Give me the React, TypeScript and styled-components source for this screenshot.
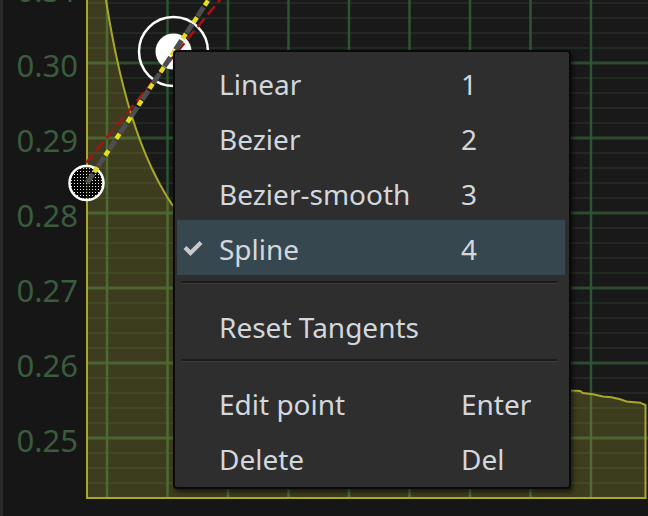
import styled, { createGlobalStyle } from 'styled-components';

type MenuItemType = {
  label: string;
  shortcut?: string;
  checked?: boolean;
};
type MenuEntryType = MenuItemType | 'separator';

const MENU_ENTRIES: MenuEntryType[] = [
  { label: 'Linear', shortcut: '1' },
  { label: 'Bezier', shortcut: '2' },
  { label: 'Bezier-smooth', shortcut: '3' },
  { label: 'Spline', shortcut: '4', checked: true },
  'separator',
  { label: 'Reset Tangents' },
  'separator',
  { label: 'Edit point', shortcut: 'Enter' },
  { label: 'Delete', shortcut: 'Del' },
];

const AXIS_LABELS = ['0.31', '0.30', '0.29', '0.28', '0.27', '0.26', '0.25'];

// the plot starts at page x = 86, everything in the svg is relative to that
const PLOT_LEFT = 86;
const px = (x: number) => x - PLOT_LEFT;

const GRID_X = Array.from({ length: 9 }, (_, i) => 21 + i * 60.5);
const GRID_Y = Array.from({ length: 34 }, (_, i) => 3 + i * 15);

const TAIL: [number, number][] = [
  [300, 300],
  [450, 370],
  [571.5, 390.5],
  [580, 391],
  [583, 393],
  [593, 394.3],
  [603, 396.5],
  [611.5, 397.3],
  [620, 399.3],
  [626.5, 401.5],
  [640, 402.7],
  [645.5, 405],
];

const buildFillPath = () => {
  const points: string[] = [];
  for (let x = 104; x <= 172; x += 2) {
    const y = 400 - 25240 / (x - 42.9);
    points.push(`${px(x)} ${y.toFixed(1)}`);
  }
  TAIL.forEach(([x, y]) => points.push(`${px(x)} ${y}`));
  return `M 1 498 L 1 -20 L ${points.join(' L ')} L ${px(645.5)} 498 Z`;
};

const CheckIcon = () => (
  <svg width="20" height="16" viewBox="0 0 20 16">
    <polyline
      points="2,7.5 7.5,13 18,2.5"
      fill="none"
      stroke="#c8cacc"
      strokeWidth="4.2"
      strokeLinejoin="miter"
    />
  </svg>
);

const CurveChart = () => (
  <ChartSvg width="562" height="499">
    <defs>
      <pattern id="halftone" width="3" height="3" patternUnits="userSpaceOnUse">
        <rect x="0" y="0" width="1" height="1" fill="#e8e8e8" />
      </pattern>
    </defs>

    {GRID_Y.map((y, i) => (
      <line
        key={`h${i}`}
        x1="0"
        x2="562"
        y1={y}
        y2={y}
        stroke={i % 5 === 4 ? '#2d4b31' : '#212922'}
        strokeWidth={i % 5 === 4 ? 3 : 2}
      />
    ))}
    {GRID_X.map((x, i) => (
      <line
        key={`v${i}`}
        x1={x}
        x2={x}
        y1="0"
        y2="499"
        stroke="#2c5532"
        strokeWidth="2.5"
      />
    ))}

    <path
      d={buildFillPath()}
      fill="rgba(200, 195, 50, 0.21)"
      stroke="#a9a82a"
      strokeWidth="2"
    />

    <circle cx="0.5" cy="183" r="17" fill="rgba(0, 0, 0, 0.85)" />
    <circle cx="0.5" cy="183" r="17" fill="url(#halftone)" stroke="#ffffff" strokeWidth="2.5" />

    <circle cx={px(173.5)} cy="51.5" r="34.5" fill="none" stroke="#ffffff" strokeWidth="2.5" />
    <circle cx={px(173.5)} cy="51.5" r="18" fill="#ffffff" />

    <line
      x1="0"
      y1="163"
      x2={px(228)}
      y2="-10"
      stroke="#a01515"
      strokeWidth="2.5"
      strokeDasharray="11 5"
    />
    <line
      x1="1"
      y1="183"
      x2={px(215)}
      y2="-10"
      stroke="#4e4e4e"
      strokeWidth="5"
      strokeDasharray="11 9"
    />
    <line
      x1="1"
      y1="183"
      x2={px(215)}
      y2="-10"
      stroke="#e4df1e"
      strokeWidth="4.5"
      strokeDasharray="6 14"
      strokeDashoffset="-13"
    />
  </ChartSvg>
);

const ContextMenu = () => (
  <MenuPanel>
    {MENU_ENTRIES.map((entry, index) => {
      if (entry === 'separator') {
        return <MenuSeparator key={index} />;
      }
      return (
        <MenuRow key={index} active={!!entry.checked}>
          <CheckSlot>{entry.checked && <CheckIcon />}</CheckSlot>
          <MenuLabel>{entry.label}</MenuLabel>
          <MenuLabel>{entry.shortcut}</MenuLabel>
        </MenuRow>
      );
    })}
  </MenuPanel>
);

const App = () => {
  return (
    <>
      <GlobalStyle />
      <Frame>
        <EdgeStrip />
        <AxisColumn>
          {AXIS_LABELS.map(label => (
            <AxisLabel key={label}>{label}</AxisLabel>
          ))}
        </AxisColumn>
        <PlotColumn>
          <PlotArea>
            <CurveChart />
          </PlotArea>
          <PlotFooter />
        </PlotColumn>
        <ContextMenu />
      </Frame>
    </>
  );
};

export default App;

const GlobalStyle = createGlobalStyle`
  html, body {
    margin: 0;
    padding: 0;
    background: #161616;
  }
  body {
    font-family: 'Noto Sans', 'Open Sans', sans-serif;
  }
`;

const Frame = styled.div`
  position: relative;
  display: flex;
  width: 648px;
  height: 516px;
  overflow: hidden;
  background: #161616;
`;

const EdgeStrip = styled.div`
  width: 3px;
  flex-shrink: 0;
  background: #2a2a2a;
`;

const AxisColumn = styled.div`
  display: flex;
  flex-direction: column;
  align-self: flex-start;
  width: 83px;
  flex-shrink: 0;
  /* the 0.31 tick sits just above the visible top edge */
  margin-top: -47.5px;
`;

const AxisLabel = styled.div`
  display: flex;
  align-items: center;
  justify-content: flex-end;
  height: 75px;
  padding-right: 8px;
  font-size: 31px;
  line-height: 1;
  color: #3a5c3d;
`;

const PlotColumn = styled.div`
  display: flex;
  flex-direction: column;
  flex: 1;
`;

const PlotArea = styled.div`
  height: 499px;
  background: #191919;
`;

const PlotFooter = styled.div`
  flex: 1;
  background: #161616;
`;

const ChartSvg = styled.svg`
  display: block;
  overflow: visible;
`;

const MenuPanel = styled.div`
  position: absolute;
  left: 173px;
  top: 50px;
  width: 398px;
  box-sizing: border-box;
  padding: 3px 0 2px;
  background: #2e2e2e;
  border: 2px solid #0a0a0a;
  border-radius: 4px;
  box-shadow: 2px 3px 4px rgba(0, 0, 0, 0.55);
`;

const MenuRow = styled.div<{ active: boolean }>`
  display: grid;
  grid-template-columns: 42px 242px 1fr;
  align-items: center;
  height: 55px;
  margin: 0 4px 0 2px;
  padding-top: 3px;
  box-sizing: border-box;
  background: ${props => (props.active ? '#37474f' : 'transparent')};
`;

const CheckSlot = styled.div`
  display: flex;
  align-items: center;
  padding-left: 6px;
  padding-bottom: 3px;
`;

const MenuLabel = styled.span`
  font-size: 28px;
  color: #d2d7dd;
  white-space: nowrap;
`;

const MenuSeparator = styled.div`
  height: 3px;
  margin: 6px 12px 13.5px 6px;
  box-sizing: border-box;
  border-top: 2px solid #1b1b1b;
  border-bottom: 1px solid #3b3b3b;
`;
